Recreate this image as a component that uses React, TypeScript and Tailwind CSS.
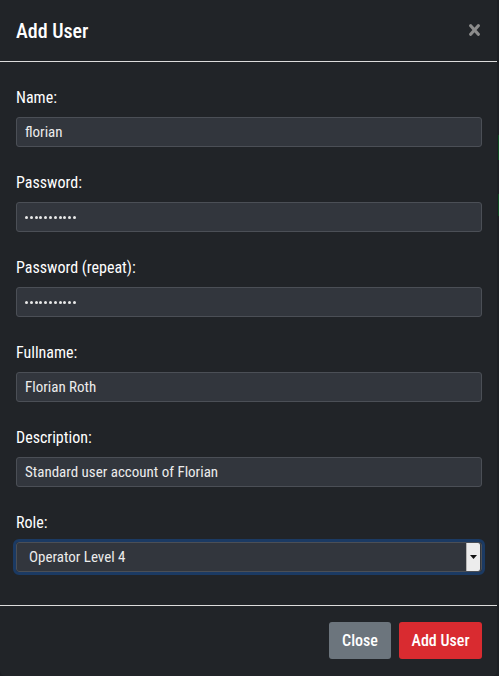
import React from "react";

const font = { fontFamily: "Roboto, 'Liberation Sans', sans-serif" };

function Dots() {
  return (
    <div className="flex gap-[1.8px]">
      {Array.from({ length: 11 }).map((_, i) => (
        <span key={i} className="w-[3px] h-[3px] rounded-full bg-[#e9e9e9]" />
      ))}
    </div>
  );
}

function Field({ label, value, password }: { label: string; value: string; password?: boolean }) {
  return (
    <div className="mb-[24px]">
      <div className="h-[24px] text-[16px] leading-[24px] font-[450] text-white font-stretch-condensed mb-[7px]">{label}</div>
      <div className="h-[30px] w-[466px] rounded-[3px] border border-[#4b4f56] bg-[#32363d] pl-[8px] flex items-center text-[15px] text-[#ececec] font-stretch-condensed">
        {password ? <Dots /> : value}
      </div>
    </div>
  );
}

export default function App() {
  return (
    <div className="w-[499px] h-[676px] bg-[#1c1f23] flex relative overflow-hidden" style={font}>
      <div className="absolute right-0 top-[135px] w-[1px] h-[25px] bg-[#0f4a22]" />
      <div className="absolute right-0 top-[194px] w-[1px] h-[22px] bg-[#0f4a22]" />
      <div className="w-[497px] h-[676px] bg-[#212428] rounded-b-[5px] flex flex-col">
        <div className="h-[62px] flex items-center justify-between pl-[16px] pr-[17px] border-b border-[#dcdcdc]">
          <div className="text-[20px] font-medium text-white font-stretch-condensed pt-[1px]">Add User</div>
          <svg width="11" height="12" viewBox="0 0 11 12" className="mb-[2px]">
            <path d="M1.7 1.8 L9.3 10.2 M9.3 1.8 L1.7 10.2" stroke="#8c8c8c" strokeWidth="3.2" strokeLinecap="round" />
          </svg>
        </div>
        <div className="pt-[24px] px-[16px] pb-[9px] border-b border-[#dcdcdc]">
          <Field label="Name:" value="florian" />
          <Field label="Password:" value="" password />
          <Field label="Password (repeat):" value="" password />
          <Field label="Fullname:" value="Florian Roth" />
          <Field label="Description:" value="Standard user account of Florian" />
          <div className="mb-[24px]">
            <div className="h-[24px] text-[16px] leading-[24px] font-[450] text-white font-stretch-condensed mb-[7px]">Role:</div>
            <div className="w-[466px] h-[30px] rounded-[3px] outline-[3px] outline-solid outline-[#1b3a63] border border-[#4b4f56] bg-[#32363d] flex items-center justify-between">
              <span className="pl-[12px] text-[15px] text-[#ececec] font-stretch-condensed">Operator Level 4</span>
              <div className="w-[14px] h-[28px] mr-[1px] bg-[#ececec] border-l border-[#b5b5b5] rounded-r-[2px] flex items-center justify-center">
                <svg width="7" height="4" viewBox="0 0 7 4">
                  <path d="M0 0 H7 L3.5 4 Z" fill="#111" />
                </svg>
              </div>
            </div>
          </div>
        </div>
        <div className="flex justify-end gap-[8px] pt-[16px] pr-[15px]">
          <button className="w-[62px] h-[37px] rounded-[3px] bg-[#6c757d] text-white text-[16px] font-medium font-stretch-condensed">Close</button>
          <button className="w-[83px] h-[37px] rounded-[3px] bg-[#d92b30] text-white text-[16px] font-medium font-stretch-condensed">Add User</button>
        </div>
      </div>
    </div>
  );
}
